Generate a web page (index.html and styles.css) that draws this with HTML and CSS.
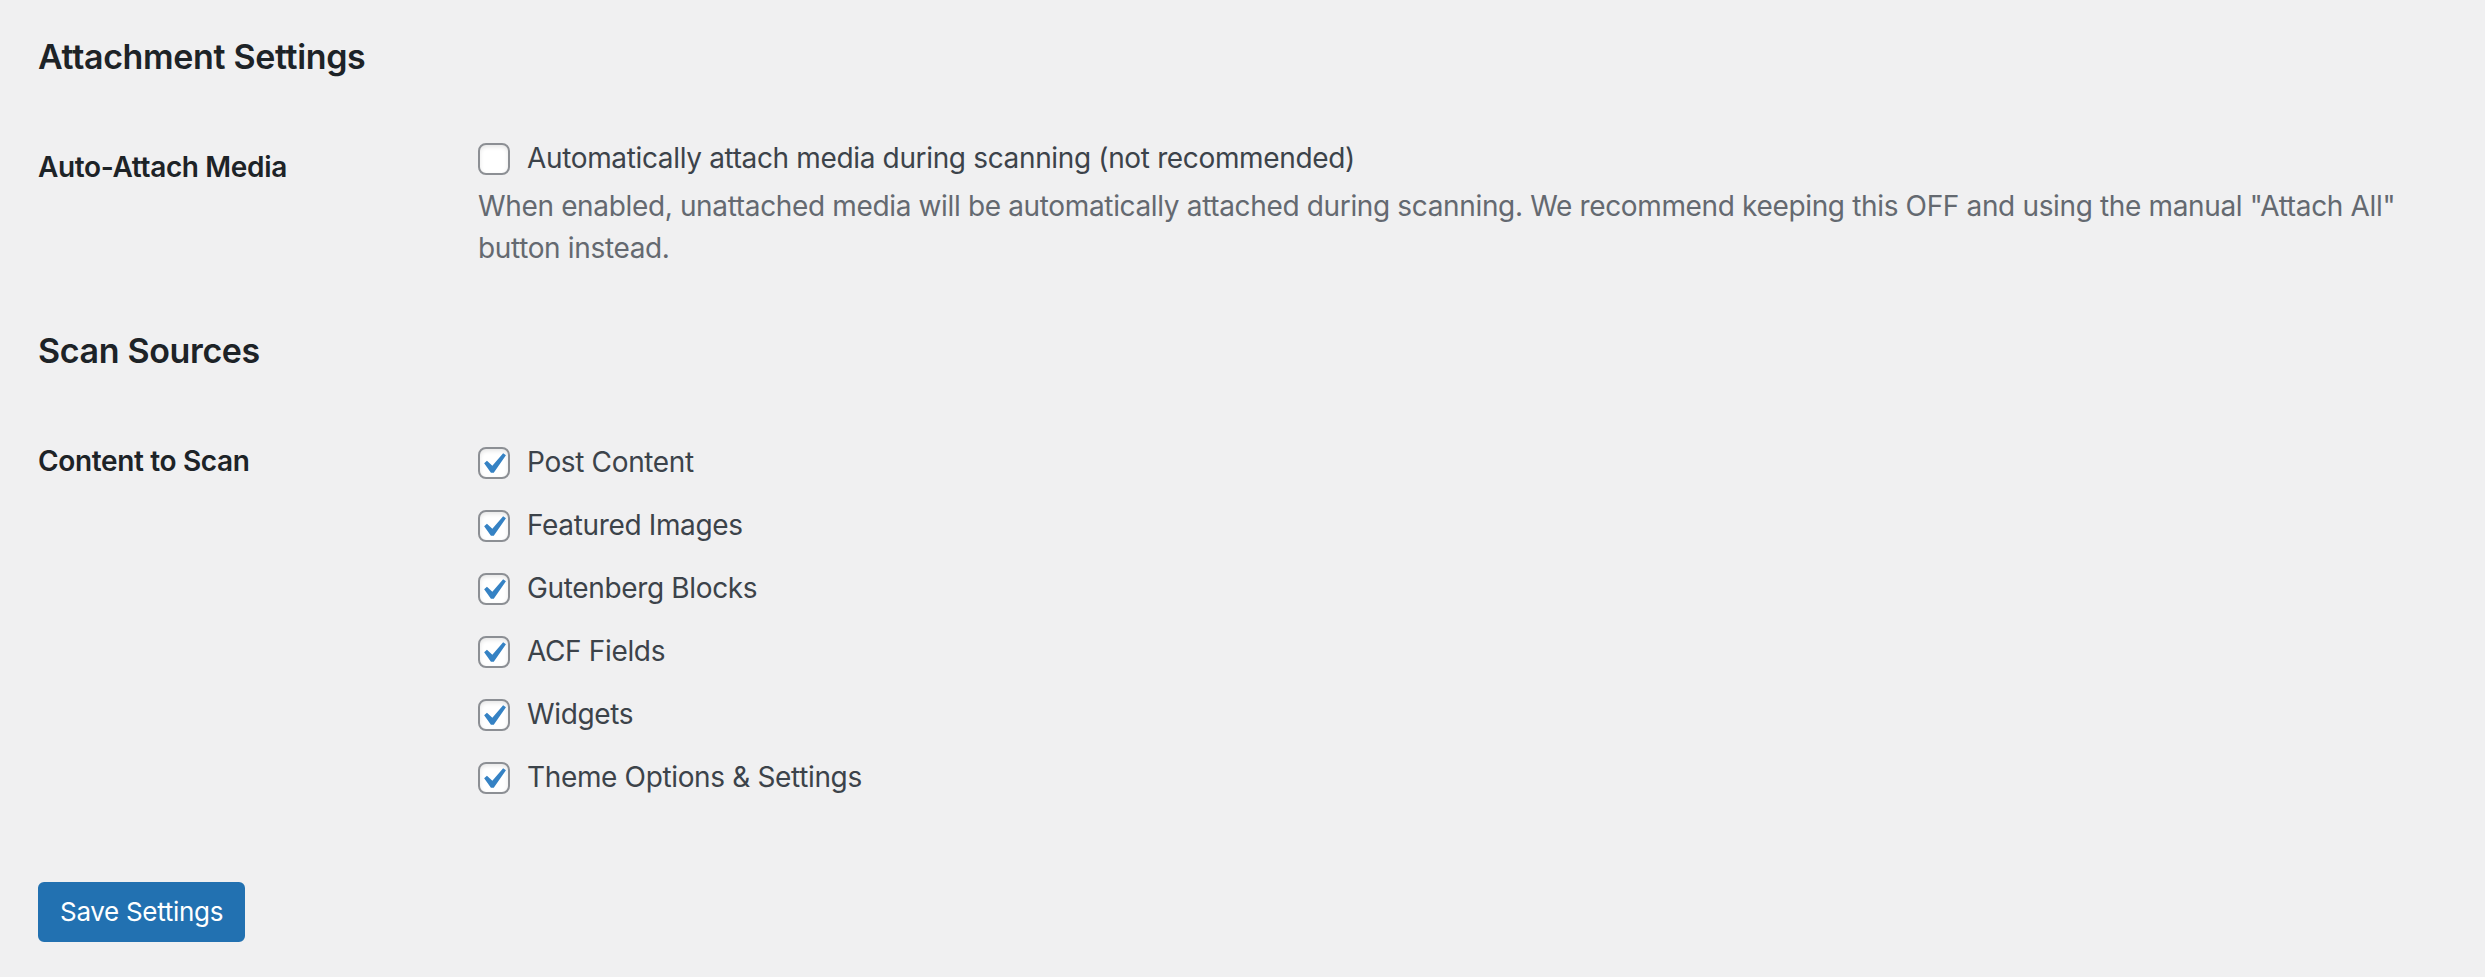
FILE: index.html
```html
<!DOCTYPE html>
<html lang="en">
<head>
<meta charset="utf-8">
<title>Attachment Settings</title>
<link rel="stylesheet" href="styles.css">
</head>
<body>
<div class="wrap">
  <h2 class="section-title">Attachment Settings</h2>
  <div class="form-row">
    <div class="row-label">Auto-Attach Media</div>
    <div class="row-field">
      <div class="check-line">
        <span class="checkbox"></span>
        <span class="check-text">Automatically attach media during scanning (not recommended)</span>
      </div>
      <p class="description">When enabled, unattached media will be automatically attached during scanning. We recommend keeping this OFF and using the manual "Attach All" button instead.</p>
    </div>
  </div>

  <h2 class="section-title">Scan Sources</h2>
  <div class="form-row">
    <div class="row-label">Content to Scan</div>
    <div class="row-field">
      <div class="check-list">
        <div class="check-item"><span class="checkbox is-checked"><svg viewBox="0 0 20 20"><path d="M14.83 4.89l1.34.94-5.81 8.38H9.02L5.78 9.67l1.34-1.25 2.57 2.4z"/></svg></span><span class="check-text">Post Content</span></div>
        <div class="check-item"><span class="checkbox is-checked"><svg viewBox="0 0 20 20"><path d="M14.83 4.89l1.34.94-5.81 8.38H9.02L5.78 9.67l1.34-1.25 2.57 2.4z"/></svg></span><span class="check-text">Featured Images</span></div>
        <div class="check-item"><span class="checkbox is-checked"><svg viewBox="0 0 20 20"><path d="M14.83 4.89l1.34.94-5.81 8.38H9.02L5.78 9.67l1.34-1.25 2.57 2.4z"/></svg></span><span class="check-text">Gutenberg Blocks</span></div>
        <div class="check-item"><span class="checkbox is-checked"><svg viewBox="0 0 20 20"><path d="M14.83 4.89l1.34.94-5.81 8.38H9.02L5.78 9.67l1.34-1.25 2.57 2.4z"/></svg></span><span class="check-text">ACF Fields</span></div>
        <div class="check-item"><span class="checkbox is-checked"><svg viewBox="0 0 20 20"><path d="M14.83 4.89l1.34.94-5.81 8.38H9.02L5.78 9.67l1.34-1.25 2.57 2.4z"/></svg></span><span class="check-text">Widgets</span></div>
        <div class="check-item"><span class="checkbox is-checked"><svg viewBox="0 0 20 20"><path d="M14.83 4.89l1.34.94-5.81 8.38H9.02L5.78 9.67l1.34-1.25 2.57 2.4z"/></svg></span><span class="check-text">Theme Options &amp; Settings</span></div>
      </div>
    </div>
  </div>

  <div class="submit-row">
    <button class="button-primary" type="button">Save Settings</button>
  </div>
</div>
</body>
</html>
```
FILE: styles.css
```css
html, body {
  margin: 0;
  padding: 0;
  background: #f0f0f1;
}
body {
  font-family: Inter, "Liberation Sans", sans-serif;
  color: #3c434a;
  font-size: 28px;
  letter-spacing: -0.35px;
}
.wrap {
  padding: 0 40px 0 38px;
}
.section-title {
  margin: 35px 0 30px;
  font-size: 34px;
  line-height: 44px;
  font-weight: 600;
  color: #1d2327;
}
.form-row + .section-title {
  margin-top: 30px;
}
.form-row {
  display: grid;
  grid-template-columns: 440px 1fr;
}
.row-label {
  padding-top: 40px;
  font-size: 28px;
  line-height: 36px;
  font-weight: 600;
  color: #1d2327;
}
.row-field {
  padding: 30px 0 30px;
}
.check-line {
  display: flex;
  align-items: center;
  height: 39px;
}
.check-text {
  line-height: 39px;
  color: #3c434a;
}
.checkbox {
  position: relative;
  flex: none;
  box-sizing: border-box;
  width: 32px;
  height: 32px;
  margin-right: 17px;
  border: 2px solid #8c8f94;
  border-radius: 8px;
  background: #fff;
  box-shadow: inset 0 2px 4px rgba(0, 0, 0, 0.1);
}
.checkbox svg {
  position: absolute;
  left: -8px;
  top: -6px;
  width: 42px;
  height: 42px;
  fill: #3582c4;
}
.description {
  margin: 7px 0 0;
  font-size: 28px;
  line-height: 42px;
  color: #646970;
}
.check-list {
  display: flex;
  flex-direction: column;
}
.check-item {
  display: flex;
  align-items: center;
  height: 39px;
  padding: 10px 0 14px;
}
.submit-row {
  padding-top: 41px;
}
.button-primary {
  height: 60px;
  padding: 0 20px;
  border: 2px solid #2271b1;
  border-radius: 6px;
  background: #2271b1;
  color: #fff;
  font-family: Inter, "Liberation Sans", sans-serif;
  font-size: 26px;
  letter-spacing: -0.3px;
  line-height: 56px;
}
```
